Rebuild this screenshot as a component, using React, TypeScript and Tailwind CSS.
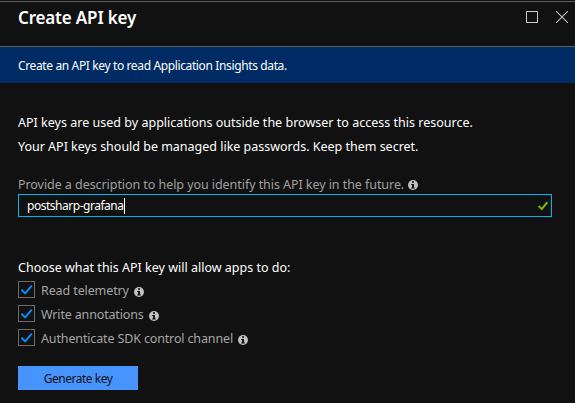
import React from "react";

function InfoIcon({ className = "" }: { className?: string }) {
  return (
    <svg className={`block h-[10px] w-[10px] shrink-0 ${className}`} viewBox="0 0 10 10">
      <circle cx="5" cy="5" r="5" fill="#bfbfbf" />
      <path d="M4 1.3h2v1.5H4zM3.2 4H6v3.6h.8v1H3.2v-1H4V5h-.8z" fill="#111" />
    </svg>
  );
}

interface OptionProps {
  label: string;
  text: string;
}

function Option({ label, text }: OptionProps) {
  return (
    <div className="flex h-6 items-start">
      <div className="flex h-[17px] w-[17px] shrink-0 items-center justify-center border border-[#6b6b6b]">
        <svg className="block h-[15px] w-[15px]" viewBox="0 0 15 15">
          <path d="M2.4 7.8 6.2 11.4 12.8 3.6" fill="none" stroke="#0a8cff" strokeWidth="2" />
        </svg>
      </div>
      <span className={`ml-1.5 pt-px text-[12.5px] leading-[18px] whitespace-nowrap text-[#a5a5a5] ${text}`}>{label}</span>
      <InfoIcon className="mt-[6px] ml-[5px]" />
    </div>
  );
}

export default function App() {
  return (
    <div className="flex h-[403px] w-[575px] flex-col overflow-hidden bg-[#111111] pt-px font-['Noto_Sans',sans-serif] text-white">
      <header className="flex h-[46px] shrink-0 justify-between border-y border-[#5f5f5f] pr-[7px] pl-[18px]">
        <h1 className="mt-[4px] text-[17px] leading-6 font-semibold tracking-[-0.17px] whitespace-nowrap">Create API key</h1>
        <div className="mt-[9px] flex gap-[18px]">
          <svg className="block h-3 w-3" viewBox="0 0 12 12">
            <path d="M.5.5h11v11H.5z" fill="none" stroke="#cfcfcf" />
          </svg>
          <svg className="block h-3 w-3" viewBox="0 0 12 12">
            <path d="M0 0 12 12M12 0 0 12" fill="none" stroke="#bdbdbd" strokeWidth="1.1" />
          </svg>
        </div>
      </header>
      <div className="flex h-9 shrink-0 items-center bg-[#002b64] pt-0.5 pl-[18px] text-[12px] tracking-[-0.37px] whitespace-nowrap">
        Create an API key to read Application Insights data.
      </div>
      <main className="flex flex-col pt-[28px] pr-[23px] pl-[18px]">
        <div className="text-[12.5px] leading-6 tracking-[0.015px] whitespace-nowrap">
          <p>API keys are used by applications outside the browser to access this resource.</p>
          <p className="tracking-[-0.01px]">Your API keys should be managed like passwords. Keep them secret.</p>
        </div>
        <div className="mt-[17px] flex h-[18px] items-start text-[12.5px] leading-[18px] tracking-[-0.06px] whitespace-nowrap text-[#a0a0a0]">
          <span>Provide a description to help you identify this API key in the future.</span>
          <InfoIcon className="mt-[4px] ml-[4px]" />
        </div>
        <div className="flex h-[23px] items-center border border-[#00b7f0] pr-[3px] pl-2 text-[12px] tracking-[-0.48px]">
          <span>postsharp-grafana</span>
          <span className="h-4 w-px bg-white" />
          <svg className="mt-px ml-auto block h-[10px] w-[10px]" viewBox="0 0 10 10">
            <path d="M.7 5 3.8 8.1 9.3 1.2" fill="none" stroke="#7fba00" strokeWidth="2" />
          </svg>
        </div>
        <div className="mt-[42px] h-[22px] text-[12.5px] leading-[18px] whitespace-nowrap">
          Choose what this API key will allow apps to do:
        </div>
        <Option label="Read telemetry" text="tracking-[-0.11px]" />
        <Option label="Write annotations" text="tracking-[-0.16px]" />
        <Option label="Authenticate SDK control channel" text="tracking-[-0.14px]" />
        <button className="mt-[13px] h-6 w-[120px] bg-[#4894fe] pt-0.5 text-[12px] leading-[22px] tracking-[-0.48px] text-[#111]">
          Generate key
        </button>
      </main>
    </div>
  );
}
